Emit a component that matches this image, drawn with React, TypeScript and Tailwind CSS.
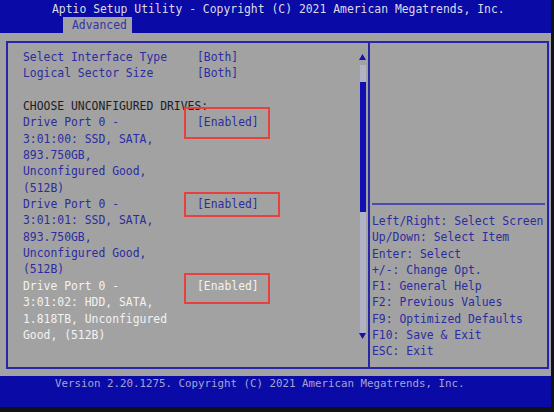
const leftRows: { lines: string[]; value?: string; tone: "blue" | "dark" | "white" }[] = [
  { lines: ["Select Interface Type"], value: "[Both]", tone: "blue" },
  { lines: ["Logical Sector Size"], value: "[Both]", tone: "blue" },
  { lines: [""], tone: "blue" },
  { lines: ["CHOOSE UNCONFIGURED DRIVES:"], tone: "dark" },
  {
    lines: ["Drive Port 0 -", "3:01:00: SSD, SATA,", "893.750GB,", "Unconfigured Good,", "(512B)"],
    value: "[Enabled]",
    tone: "blue",
  },
  {
    lines: ["Drive Port 0 -", "3:01:01: SSD, SATA,", "893.750GB,", "Unconfigured Good,", "(512B)"],
    value: "[Enabled]",
    tone: "blue",
  },
  {
    lines: ["Drive Port 0 -", "3:01:02: HDD, SATA,", "1.818TB, Unconfigured", "Good, (512B)"],
    value: "[Enabled]",
    tone: "white",
  },
];

const helpLines = [
  "Left/Right: Select Screen",
  "Up/Down: Select Item",
  "Enter: Select",
  "+/-: Change Opt.",
  "F1: General Help",
  "F2: Previous Values",
  "F9: Optimized Defaults",
  "F10: Save & Exit",
  "ESC: Exit",
];

const toneClass = {
  blue: "text-[#2c2ca0]",
  dark: "text-[#1c1c24]",
  white: "text-[#f2f2f2]",
};

function ScrollBar() {
  return (
    <div className="flex flex-col items-center w-[7px] mr-[2px] mt-[11px]">
      <svg width="7" height="6" viewBox="0 0 7 6">
        <polygon points="3.5,0 7,6 0,6" fill="#1414a8" />
      </svg>
      <div className="mt-[5px] w-[6px] h-[268px] flex flex-col bg-[#b2b2c6]">
        <div className="h-[17px]" />
        <div className="h-[130px] bg-[#1010b0]" />
      </div>
      <svg width="7" height="6" viewBox="0 0 7 6">
        <polygon points="0,0 7,0 3.5,6" fill="#1414a8" />
      </svg>
    </div>
  );
}

export default function App() {
  return (
    <div className="relative w-[554px] h-[412px] bg-[#121212] overflow-hidden font-['DejaVu_Sans_Mono','Liberation_Mono',monospace] text-[11.4px]">
      <div className="w-[551px] h-[407px] flex flex-col">
        {/* title bar + tabs */}
        <div className="h-[33px] bg-[#0a0aa6] flex flex-col">
          <div className="h-[17px] leading-[18px] pl-[52px] text-[#dcdce8] whitespace-pre">
            Aptio Setup Utility - Copyright (C) 2021 American Megatrends, Inc.
          </div>
          <div className="ml-[63px] w-[69px] h-[16px] bg-[#a2a2a2] pl-[9px] leading-[16px] text-[#3434a4]">
            Advanced
          </div>
        </div>

        {/* main area */}
        <div className="flex-1 bg-[#a2a2a2] pt-[8px] pl-[6px] pb-[7px] pr-[2px]">
          <div className="h-full border-2 border-[#2626a6] flex">
            <div className="w-[362px] border-r-2 border-[#2626a6] flex">
              <div className="flex-1 pl-[15px] pt-[6px] leading-[16.35px] whitespace-pre">
                {leftRows.map((row, i) => (
                  <div key={i} className={`flex ${toneClass[row.tone]}`}>
                    <div className="w-[174px]">
                      {row.lines.map((l, j) => (
                        <div key={j} className="h-[16.35px]">
                          {l}
                        </div>
                      ))}
                    </div>
                    {row.value && <div>{row.value}</div>}
                  </div>
                ))}
              </div>
              <ScrollBar />
            </div>
            <div className="flex-1 flex flex-col">
              <div className="h-[160px]" />
              <div className="mx-[2px] h-[2px] bg-[#4a4ab0]" />
              <div className="pl-[2px] pt-[8px] leading-[16.25px] text-[#2c2ca0] whitespace-pre">
                {helpLines.map((l) => (
                  <div key={l}>{l}</div>
                ))}
              </div>
            </div>
          </div>
        </div>

        {/* footer */}
        <div className="h-[31px] bg-[#0a0aa6] pl-[55px] leading-[16px] text-[10.8px] text-[#a4a4d4] whitespace-pre">
          Version 2.20.1275. Copyright (C) 2021 American Megatrends, Inc.
        </div>
      </div>

      {/* red highlight frames */}
      <div className="absolute left-[184px] top-[107px] w-[86px] h-[32px] border-2 border-[#e8403c]" />
      <div className="absolute left-[184px] top-[192px] w-[96px] h-[25px] border-2 border-[#e8403c]" />
      <div className="absolute left-[184px] top-[273px] w-[86px] h-[31px] border-2 border-[#e8403c]" />
    </div>
  );
}
